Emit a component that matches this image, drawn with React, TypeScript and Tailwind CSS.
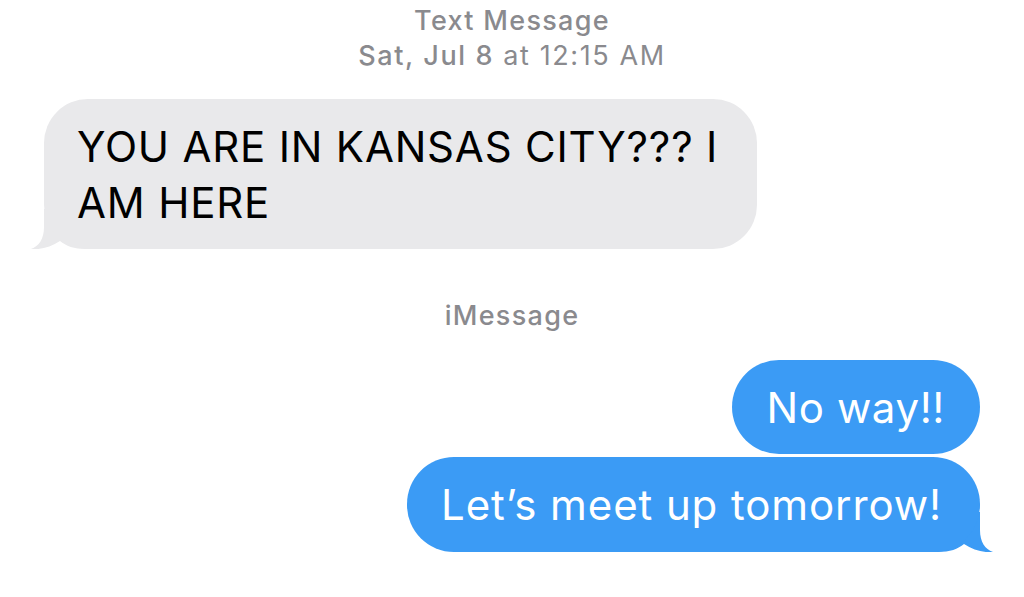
import React from 'react';

const GRAY = '#e9e9eb';
const BLUE = '#3b9bf5';

const TailLeft = () => (
  <svg className="absolute left-[-14px] bottom-0" width="60" height="40" viewBox="0 0 60 40">
    <path d="M60,0 L14,0 L14,18 C14,30 9,37 1,40 C10,41 21,38 30,32 C36,37 44,40 56,40 L60,40 Z" fill={GRAY} />
  </svg>
);

const TailRight = () => (
  <svg className="absolute right-[-14px] bottom-0" width="60" height="40" viewBox="0 0 60 40">
    <path d="M0,0 L46,0 L46,18 C46,30 51,37 59,40 C50,41 39,38 30,32 C24,37 16,40 4,40 L0,40 Z" fill={BLUE} />
  </svg>
);

export default function App() {
  return (
    <div className="w-full h-[597px] bg-white overflow-hidden font-['Inter',sans-serif] flex flex-col">
      {/* header */}
      <div className="pt-[3px] text-center text-[#8a8a8e] text-[27px] leading-[35px] tracking-[1.3px]">
        <div className="font-medium">Text Message</div>
        <div className="tracking-[1.6px]">
          <span className="font-medium">Sat, Jul 8</span> at 12:15 AM
        </div>
      </div>

      {/* incoming */}
      <div className="mt-[26px] ml-[44px] relative w-[713px]">
        <div className="relative z-10 bg-[#e9e9eb] rounded-[44px] pl-[33px] pr-[36px] pt-[20px] pb-[18px] text-black text-[42px] leading-[56px] tracking-[0.8px] whitespace-nowrap">
          YOU ARE IN KANSAS CITY??? I
          <br />
          AM HERE
        </div>
        <TailLeft />
      </div>

      <div className="mt-[49px] text-center text-[#8a8a8e] text-[27px] leading-[35px] tracking-[1.3px] font-medium">
        iMessage
      </div>

      {/* outgoing */}
      <div className="mt-[27px] mr-[44px] flex flex-col items-end gap-[3px]">
        <div className="bg-[#3b9bf5] rounded-[47px] pl-[34px] pr-[35px] pt-[20px] pb-[18px] text-white text-[42px] leading-[56px] tracking-[0.6px] whitespace-nowrap">
          No way!!
        </div>
        <div className="relative">
          <div className="relative z-10 bg-[#3b9bf5] rounded-[47px] pl-[34px] pr-[38px] pt-[20px] pb-[19px] text-white text-[42px] leading-[56px] tracking-[0.9px] whitespace-nowrap">
            Let’s meet up tomorrow!
          </div>
          <TailRight />
        </div>
      </div>
    </div>
  );
}
